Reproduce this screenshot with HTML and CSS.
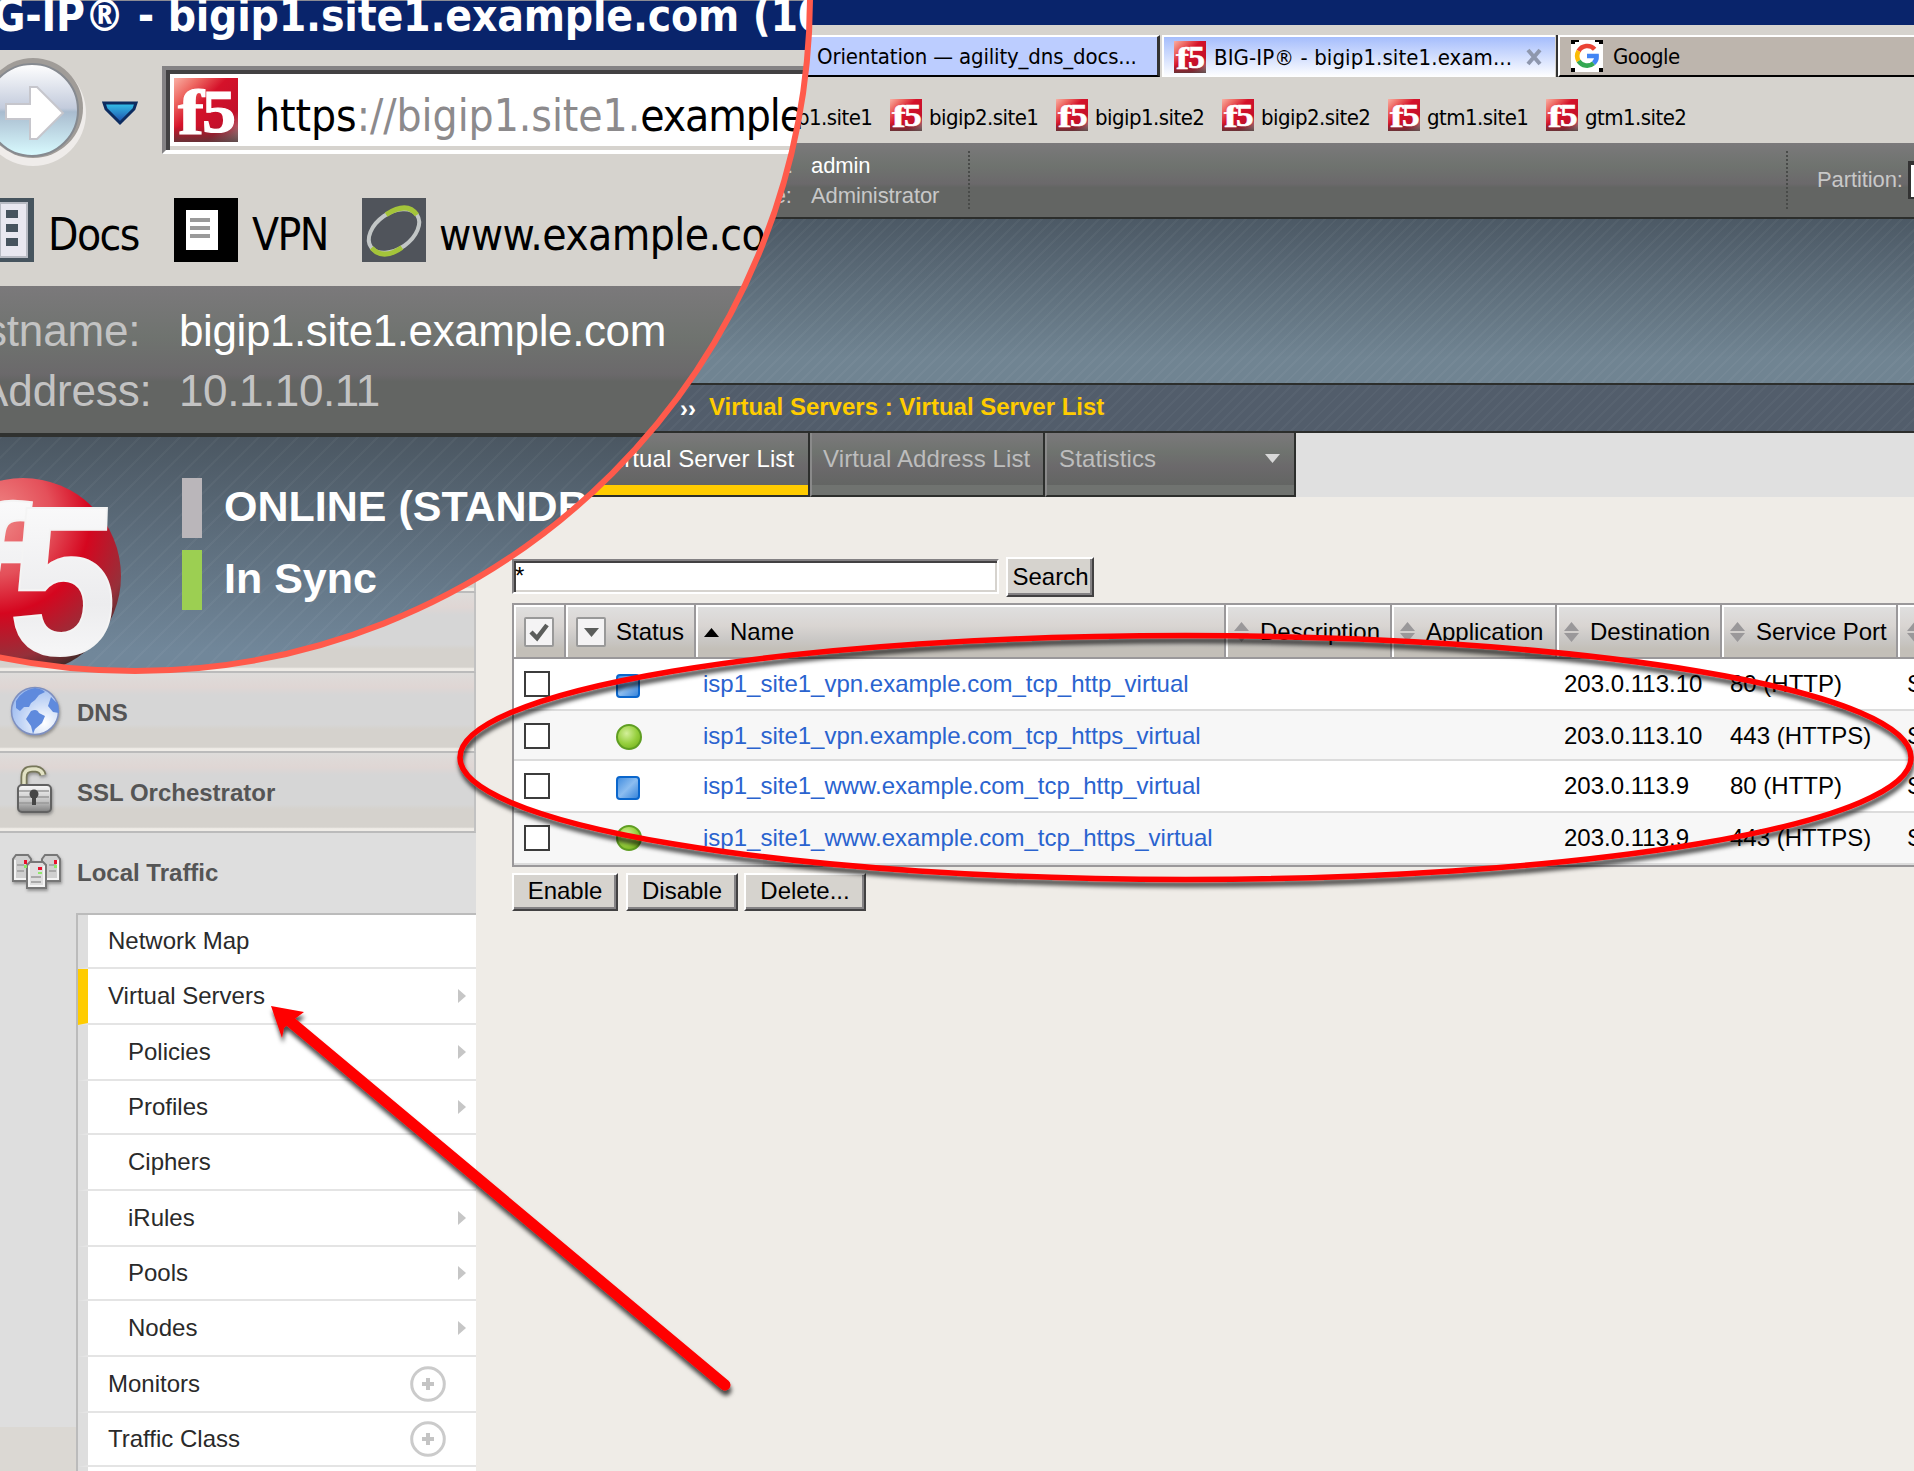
FILE: index.html
```html
<!DOCTYPE html>
<html lang="en">
<head>
<meta charset="utf-8">
<title>BIG-IP® - bigip1.site1.example.com</title>
<link rel="stylesheet" href="styles.css">
</head>
<body>
<svg class="defs" width="0" height="0">
  <defs>
    <linearGradient id="favbg" x1="0" y1="0" x2="1" y2="1">
      <stop offset="0" stop-color="#f9b0a4"/><stop offset=".2" stop-color="#ee6862"/><stop offset=".42" stop-color="#d5122a"/><stop offset=".75" stop-color="#c2102a"/><stop offset="1" stop-color="#a39b9b"/>
    </linearGradient>
    <linearGradient id="favshade" x1="0" y1="0" x2="0" y2="1">
      <stop offset=".75" stop-color="#503030" stop-opacity="0"/><stop offset="1" stop-color="#503a3a" stop-opacity=".8"/>
    </linearGradient>
    <radialGradient id="ball" cx=".35" cy=".2" r=".85">
      <stop offset="0" stop-color="#f08a88"/><stop offset=".35" stop-color="#e4505a"/><stop offset=".58" stop-color="#d5061f"/><stop offset=".85" stop-color="#96303a"/><stop offset="1" stop-color="#3c2826"/>
    </radialGradient>
    <linearGradient id="five" x1="0" y1="0" x2="0" y2="1">
      <stop offset="0" stop-color="#fff"/><stop offset=".6" stop-color="#ececee"/><stop offset="1" stop-color="#fff"/>
    </linearGradient>
    <linearGradient id="nav" x1="0" y1="0" x2="0" y2="1">
      <stop offset="0" stop-color="#fff"/><stop offset=".48" stop-color="#c3cbdc"/><stop offset=".52" stop-color="#a9bccf"/><stop offset="1" stop-color="#d9fbff"/>
    </linearGradient>
    <linearGradient id="drop" x1="0" y1="0" x2="0" y2="1">
      <stop offset="0" stop-color="#35c4ea"/><stop offset="1" stop-color="#1c48a8"/>
    </linearGradient>
    <linearGradient id="blue" x1="0" y1="0" x2="1" y2="1">
      <stop offset="0" stop-color="#3d8ade"/><stop offset=".5" stop-color="#8cbdf0"/><stop offset="1" stop-color="#2f7fd8"/>
    </linearGradient>
    <radialGradient id="green" cx=".4" cy=".35" r=".7">
      <stop offset="0" stop-color="#d3ef9a"/><stop offset=".6" stop-color="#97d03f"/><stop offset="1" stop-color="#79b51f"/>
    </radialGradient>
    <radialGradient id="globe" cx=".7" cy=".75" r=".9">
      <stop offset="0" stop-color="#fff"/><stop offset="1" stop-color="#8fb2ee"/>
    </radialGradient>
    <linearGradient id="metal" x1="0" y1="0" x2="0" y2="1">
      <stop offset="0" stop-color="#fafafa"/><stop offset=".6" stop-color="#c2c2c2"/><stop offset="1" stop-color="#7e7e7e"/>
    </linearGradient>
    <filter id="soft" x="-20%" y="-20%" width="140%" height="150%"><feDropShadow dx="1" dy="2" stdDeviation="1.6" flood-color="#555" flood-opacity=".55"/></filter>
    <filter id="mark" filterUnits="userSpaceOnUse" x="0" y="0" width="1914" height="1471"><feDropShadow dx="1" dy="5" stdDeviation="2" flood-color="#000" flood-opacity=".7"/></filter>
    <symbol id="f5" viewBox="0 0 32 32">
      <rect width="32" height="32" fill="url(#favbg)"/>
      <rect width="32" height="32" fill="url(#favshade)"/>
      <g fill="#fff" stroke="#fff" stroke-width=".6" font-family="Liberation Serif, serif" font-weight="bold">
        <text x="2" y="28" font-size="32" textLength="13" lengthAdjust="spacingAndGlyphs">f</text>
        <text x="14" y="27" font-size="31" textLength="17" lengthAdjust="spacingAndGlyphs">5</text>
      </g>
    </symbol>
    <symbol id="sq" viewBox="0 0 24 24"><rect x="1" y="1" width="22" height="22" rx="3" fill="url(#blue)" stroke="#0a66cc" stroke-width="2"/></symbol>
    <symbol id="dot" viewBox="0 0 26 26"><circle cx="13" cy="13" r="12" fill="url(#green)" stroke="#5f9e22" stroke-width="2"/></symbol>
    <symbol id="sort" viewBox="0 0 15 20"><path d="M7.5 0L15 9H0zM7.5 20L15 11H0z" fill="#9a989a"/></symbol>
    <symbol id="plus" viewBox="0 0 36 36"><circle cx="18" cy="18" r="16.3" fill="#fff" stroke="#cbcbcb" stroke-width="3"/><path d="M18 12v12M12 18h12" stroke="#c4c4c4" stroke-width="4"/></symbol>
  </defs>
</svg>

<div class="titlebar"></div>
<div class="tabstrip">
  <div class="tab tab-bg"><span class="t1">Orientation — agility_dns_docs...</span></div>
  <div class="tab tab-on"><svg class="i32"><use href="#f5"/></svg><span class="t2">BIG-IP® - bigip1.site1.exam...</span>
    <svg class="close" viewBox="0 0 16 16"><path d="M2 1l12 14M14 1L2 15" stroke="#8e97ad" stroke-width="4"/></svg></div>
  <div class="tab tab-off">
    <svg class="i32" viewBox="0 0 32 32"><rect width="32" height="32" fill="#000"/><path d="M8 0h16v2h4v2h4v24h-4v4H4v-4H0V4h4V2h4z" fill="#fff"/>
      <g fill="none" stroke-width="4.6"><path d="M23.6 9.2A10 10 0 0 0 7.6 11" stroke="#ea4335"/><path d="M7.6 11a10 10 0 0 0 0 10" stroke="#fbbc05"/><path d="M7.6 21a10 10 0 0 0 15 2.2" stroke="#34a853"/><path d="M22.6 23.2A9 9 0 0 0 25.6 16H16" stroke="#4285f4"/></g></svg>
    <span class="t3">Google</span></div>
</div>
<div class="bookmarks">
  <div class="bm first"><span>bigip1.site1</span></div>
  <div class="bm"><svg class="i32"><use href="#f5"/></svg><span>bigip2.site1</span></div>
  <div class="bm"><svg class="i32"><use href="#f5"/></svg><span>bigip1.site2</span></div>
  <div class="bm"><svg class="i32"><use href="#f5"/></svg><span>bigip2.site2</span></div>
  <div class="bm short"><svg class="i32"><use href="#f5"/></svg><span>gtm1.site1</span></div>
  <div class="bm short"><svg class="i32"><use href="#f5"/></svg><span>gtm1.site2</span></div>
</div>
<header class="info">
  <dl class="who">
    <dt>User:</dt><dd class="strong">admin</dd>
    <dt>Role:</dt><dd>Administrator</dd>
  </dl>
  <div class="dots"></div>
  <div class="grow"></div>
  <div class="dots"></div>
  <div class="partition">Partition:</div>
  <div class="select"></div>
</header>
<div class="banner"></div>

<div class="body">
  <nav class="side">
    <div class="gap"></div>
    <div class="sec"></div><div class="sec"></div><div class="sec"></div>
    <div class="sec">
      <svg class="sicon" viewBox="0 0 56 60"><g filter="url(#soft)"><circle cx="27" cy="29" r="23.5" fill="url(#globe)" stroke="#7d8fc0" stroke-width="1.5"/>
        <path transform="translate(-1 2)" d="M9 17Q15 6 28 4q8 1 10 4l-6 3-4 5-4 3-2 4-5 0-4 4-4-3zM24 27q6-3 8 2l6 3-3 7-7 6-2 5-2-8-5-7zM44 13l7 7 1 9-6-1-5-6z" fill="#5f8add"/></g></svg>
      <span>DNS</span></div>
    <div class="sec">
      <svg class="sicon" viewBox="0 0 56 60"><g filter="url(#soft)"><path d="M16 24V15q0-8 8-8h4q6 1 7 6" fill="none" stroke="#77775a" stroke-width="7"/><path d="M16 24V15q0-8 8-8h4q6 1 7 6" fill="none" stroke="#e2e2c4" stroke-width="3.5"/>
        <rect x="10" y="23" width="33" height="27" rx="4" fill="url(#metal)" stroke="#626262" stroke-width="2"/><path d="M11 29h30M11 35h30M11 41h30" stroke="#999" stroke-width="1.5"/><circle cx="26" cy="32" r="4.5" fill="#444"/><path d="M24 33h4v10h-4z" fill="#444"/></g></svg>
      <span>SSL Orchestrator</span></div>
    <div class="local">
      <svg class="sicon" viewBox="0 -3 56 60"><g filter="url(#soft)" stroke="#777" stroke-width="2">
        <path d="M5 13l3-4h12l3 4v22H5z" fill="#d0d0d0"/>
        <path d="M34 13l3-4h12l3 4v22H34z" fill="#d0d0d0"/>
        <path d="M19 19l3-3h13l3 3v23H19z" fill="#dedede"/></g>
        <g fill="none" stroke="#f4f4f4" stroke-width="2"><path d="M7 14v19h11M50 14v19H39M21 20v20h15V20"/></g>
        <g><path d="M9 19h7M9 25h7M41 19h7M41 25h7M23 31h10M23 36h10" stroke="#aaa" stroke-width="2"/><path d="M16 14h3v4h-3zM46 14h3v4h-3zM30 21h4v3h-4z" fill="#e8112d"/><path d="M16 19h3v3h-3zM46 19h3v3h-3zM30 26h4v2h-4z" fill="#8fe86a"/></g></svg>
      <span>Local Traffic</span></div>
    <ul class="menu">
      <li>Network Map</li>
      <li class="on h2">Virtual Servers<i class="arr"></i></li>
      <li class="sub h2">Policies<i class="arr"></i></li>
      <li class="sub">Profiles<i class="arr"></i></li>
      <li class="sub h2">Ciphers</li>
      <li class="sub h2">iRules<i class="arr"></i></li>
      <li class="sub">Pools<i class="arr"></i></li>
      <li class="sub h2">Nodes<i class="arr"></i></li>
      <li class="h2">Monitors<svg class="plus"><use href="#plus"/></svg></li>
      <li>Traffic Class<svg class="plus"><use href="#plus"/></svg></li>
      <li></li>
    </ul>
  </nav>
  <main class="main">
    <div class="crumb"><span class="raquo">››</span><span>Virtual Servers : Virtual Server List</span></div>
    <div class="mtabs">
      <div class="mtab active">Virtual Server List</div>
      <div class="mtab mid">Virtual Address List</div>
      <div class="mtab last">Statistics<svg width="15" height="9"><path d="M0 0h15L7.500 9z" fill="#d8d8d8"/></svg></div>
    </div>
    <div class="content">
      <div class="search"><div class="input">*</div><div class="btn b0">Search</div></div>
      <div class="table">
        <div class="tr th">
          <div class="c1"><svg width="30" height="30"><rect x="1" y="1" width="28" height="28" rx="1" fill="#f4f3f4" stroke="#999" stroke-width="2"/><path d="M7 15l6 6L23 8" fill="none" stroke="#5b5d5b" stroke-width="4.500"/></svg></div>
          <div class="c2"><svg width="30" height="30"><rect x="1" y="1" width="28" height="28" rx="1" fill="#f4f3f4" stroke="#999" stroke-width="2"/><path d="M8 11h15l-7.500 9z" fill="#5b5d5b"/></svg><span>Status</span></div>
          <div class="c3"><svg width="15" height="9"><path d="M7.500 0L15 9H0z" fill="#000"/></svg><span>Name</span></div>
          <div class="c4"><svg class="so"><use href="#sort"/></svg><span>Description</span></div>
          <div class="c5"><svg class="so"><use href="#sort"/></svg><span>Application</span></div>
          <div class="c6"><svg class="so"><use href="#sort"/></svg><span>Destination</span></div>
          <div class="c7"><svg class="so"><use href="#sort"/></svg><span>Service Port</span></div>
          <div class="c8"><svg class="so"><use href="#sort"/></svg></div>
        </div>
        <div class="tr td"><div class="c1"><b class="box"></b></div><div class="c2"><svg class="sq"><use href="#sq"/></svg></div><div class="c3">isp1_site1_vpn.example.com_tcp_http_virtual</div><div class="c4"></div><div class="c5"></div><div class="c6">203.0.113.10</div><div class="c7">80 (HTTP)</div><div class="c8">Standard</div></div>
        <div class="tr td even"><div class="c1"><b class="box"></b></div><div class="c2"><svg class="dot"><use href="#dot"/></svg></div><div class="c3">isp1_site1_vpn.example.com_tcp_https_virtual</div><div class="c4"></div><div class="c5"></div><div class="c6">203.0.113.10</div><div class="c7">443 (HTTPS)</div><div class="c8">Standard</div></div>
        <div class="tr td"><div class="c1"><b class="box"></b></div><div class="c2"><svg class="sq"><use href="#sq"/></svg></div><div class="c3">isp1_site1_www.example.com_tcp_http_virtual</div><div class="c4"></div><div class="c5"></div><div class="c6">203.0.113.9</div><div class="c7">80 (HTTP)</div><div class="c8">Standard</div></div>
        <div class="tr td even tall"><div class="c1"><b class="box"></b></div><div class="c2"><svg class="dot"><use href="#dot"/></svg></div><div class="c3">isp1_site1_www.example.com_tcp_https_virtual</div><div class="c4"></div><div class="c5"></div><div class="c6">203.0.113.9</div><div class="c7">443 (HTTPS)</div><div class="c8">Standard</div></div>
      </div>
      <div class="actions"><div class="btn b1">Enable</div><div class="btn b2">Disable</div><div class="btn b3">Delete...</div></div>
    </div>
  </main>
</div>

<svg class="marks" viewBox="0 0 1914 1471">
  <ellipse cx="1185.500" cy="757.5" rx="725.500" ry="122" fill="none" stroke="#f00" stroke-width="5.500" filter="url(#mark)"/>
  <g filter="url(#mark)"><path d="M286 1018L725 1385" stroke="#f00" stroke-width="11" stroke-linecap="round"/><path d="M271 1006l33 6-12 9-8 7-2 10z" fill="#f00"/></g>
</svg>

<div class="lens">
  <div class="ltitle">G-IP® - <span>bigip1.site1.example.com (10.1.10.11)</span></div>
  <div class="ltool">
    <svg class="lnav" width="150" height="124" viewBox="0 0 150 124">
      <circle cx="33" cy="63" r="53" fill="#efecea"/><circle cx="33" cy="58" r="50" fill="#a09c98"/><circle cx="32" cy="60" r="46" fill="url(#nav)" stroke="#868a90" stroke-width="2"/>
      <path d="M6 54h24V37h7l26 26-26 26h-7V69H6z" fill="#fff" stroke="#c6c6cc" stroke-width="2"/>
      <path d="M104 53h32l-2 6-14 14-14-14z" fill="url(#drop)" stroke="#0d2c60" stroke-width="3"/>
    </svg>
    <div class="lurl"><svg class="i64"><use href="#f5"/></svg><span class="u"><span>https</span><em>://bigip1.site1.</em><span class="dom">example.com</span></span></div>
  </div>
  <div class="lbm">
    <svg class="ldoc" width="34" height="64"><rect width="34" height="64" fill="#46545e"/><rect x="0" y="5" width="27" height="54" fill="#e8e8f0" stroke="#b8bcc4" stroke-width="2"/><path d="M6 12h12v8H6zM6 26h12v8H6zM6 40h12v8H6z" fill="#46545e"/></svg>
    <span class="docs">Docs</span>
    <svg class="i64" viewBox="0 0 64 64"><rect width="64" height="64" fill="#000"/><rect x="12" y="12" width="32" height="40" fill="#fff"/><path d="M16 22h20M16 30h20M16 38h20" stroke="#9a9a9a" stroke-width="4"/></svg>
    <span class="vpn">VPN</span>
    <svg class="i64" viewBox="0 0 64 64"><rect width="64" height="64" fill="#50545b"/><g fill="none" stroke-width="4" transform="rotate(-35 32 33)"><ellipse cx="32" cy="33" rx="28" ry="18" stroke="#c2c6c6"/><path d="M35 15q25 1 25 18M4 34q2 17 25 17" stroke="#a4c43a" stroke-width="5"/></g></svg>
    <span class="www">www.example.com</span>
  </div>
  <dl class="linfo"><dt>Hostname:</dt><dd class="strong">bigip1.site1.example.com</dd><dt>IP Address:</dt><dd>10.1.10.11</dd></dl>
  <div class="lstat stripes">
    <svg class="lball" width="182" height="240" viewBox="0 0 182 240">
      <circle cx="23" cy="139" r="98" fill="url(#ball)"/>
      <g fill="url(#five)" stroke="#f4f4f4" stroke-width="2" font-family="Liberation Sans, sans-serif" font-weight="bold">
        <text transform="translate(-64 218) skewX(-8)" font-size="213" textLength="74" lengthAdjust="spacingAndGlyphs">f</text>
        <text transform="translate(7 217) skewX(-2)" font-size="212" textLength="108" lengthAdjust="spacingAndGlyphs">5</text>
      </g>
    </svg>
    <div class="lrows"><div class="lrow"><i></i><span>ONLINE (STANDBY)</span></div><div class="lrow sync"><i></i><span>In Sync</span></div></div>
  </div>
</div>
<div class="lensring"></div>
</body>
</html>
```
FILE: styles.css
```css
* { box-sizing: border-box; }
body {
  margin: 0; width: 1914px; height: 1471px; overflow: hidden; position: relative;
  display: flex; flex-direction: column;
  background: #efece7; color: #1e1e1e;
  font: 24px "Liberation Sans", Arial, sans-serif; white-space: nowrap;
}
svg { display: block; flex: none; overflow: visible; }
.defs { position: absolute; }
.i32 { width: 32px; height: 32px; }
.i64 { width: 64px; height: 64px; }
.grow { flex: 1; }

/* browser chrome */
.titlebar { height: 25px; flex: none; background: #09246b; }
.tabstrip {
  height: 52px; flex: none; display: flex; padding: 10px 0 0 560px; background: #d6d3ce; color: #000;
  font-family: "DejaVu Sans Condensed", "DejaVu Sans", sans-serif; font-size: 22px; font-stretch: condensed;
}
.tab { height: 42px; display: flex; align-items: center; gap: 8px; border-top: 2px solid #fff; }
.tab span { padding-top: 1px; }
.tab-bg { width: 600px; padding-left: 257px; background: #bccdff; border-right: 3px solid #333; border-bottom: 2px solid #000; }
.tab-on { width: 393px; margin-left: 2px; padding-left: 10px; border-left: 2px solid #fff; background: linear-gradient(#a5bdfc, #fff); }
.tab-off { flex: 1; gap: 10px; padding-left: 11px; background: #bdb5ad; border-bottom: 2px solid #000; border-left: 2px solid #fff; margin-left: 3px; box-shadow: -2px 0 0 #333; }
.t1 { letter-spacing: -0.15px; }
.t2 { letter-spacing: 0.1px; flex: 1; }
.t3 { letter-spacing: -0.5px; }
.close { width: 16px; height: 16px; margin-right: 13px; }
.bookmarks {
  height: 66px; flex: none; display: flex; padding: 10px 0 0 763px; background: #d6d3ce; color: #000;
  font-family: "DejaVu Sans Condensed", "DejaVu Sans", sans-serif; font-size: 22px; font-stretch: condensed; letter-spacing: -0.55px;
}
.bm { display: flex; align-items: center; gap: 7px; width: 166px; }
.bm span { padding-top: 4px; }
.bm.first { width: 127px; }
.bm.short { width: 158px; }

/* product header */
.info {
  height: 76px; flex: none; display: flex; color: #c8c8c8; font-size: 22px;
  background: linear-gradient(#7b797b, #6f736f 30%, #6b696b 55%, #636563 60%, #636563); border-bottom: 2px solid #2c2e2c;
}
.who { margin: 0; padding: 8px 0 0 741px; width: 968px; display: grid; grid-template-columns: 70px 1fr; grid-auto-rows: 30px; line-height: 30px; letter-spacing: -.1px; }
.who dt, .who dd { margin: 0; }
.strong { color: #fff; }
.dots { width: 2px; height: 58px; margin-top: 8px; background: repeating-linear-gradient(#494b49 0 2px, transparent 2px 4px); }
.partition { width: 120px; padding-left: 29px; line-height: 73px; letter-spacing: -.1px; }
.select { width: 6px; height: 38px; margin-top: 18px; background: #fff; border: 2px solid #333; border-width: 4px 0 2px 3px; }
.stripes { background: repeating-linear-gradient(135deg, rgba(255,255,255,.035) 0 2px, transparent 2px 14px), linear-gradient(#4b5762, #71879a 90%); }
.banner { height: 166px; flex: none; background: repeating-linear-gradient(135deg, rgba(255,255,255,.035) 0 2px, transparent 2px 8px), linear-gradient(#4c5965, #708492 85%); border-bottom: 2px solid #2c2e2c; }

.body { flex: 1; display: flex; min-height: 0; }

/* navigation column */
.side { width: 476px; flex: none; overflow: hidden; color: #555; background: linear-gradient(#dedede 0 1042px, #dbd8d3 1042px); }
.gap { height: 48px; }
.sec {
  height: 80px; padding: 0 0 0 8px; display: flex; align-items: center; font-weight: bold;
  border-bottom: 2px solid #bbb; border-right: 2px solid #c2c2c2;
  background: linear-gradient(#dedcda, #dfd6d4 18%, #d6d6d6 28%, #d6d6d6 66%, #d5d2cd 72%, #d5d2cd 95%, #efece7 97%);
}
.sicon { width: 56px; height: 60px; }
.sec span, .local span { padding-left: 13px; }
.sec span { padding-top: 1px; }
.local { height: 80px; padding-left: 8px; display: flex; align-items: center; font-weight: bold; }
.menu { margin: 0 0 0 76px; padding: 0; list-style: none; border: solid #bbb; border-width: 2px 0 0 2px; color: #2a2a2a; }
.menu li { height: 54px; display: flex; align-items: center; border-left: 10px solid #dedede; border-bottom: 2px solid #e4e4e4; background: #fff; padding: 0 0 1px 20px; }
.menu li.h2 { height: 56px; }
.menu li.on { border-left-color: #fc0; padding-left: 20px; }
.menu li.sub { padding-left: 40px; }
.arr { margin-left: auto; margin-right: 10px; border: solid transparent; border-width: 7px 0 7px 8px; border-left-color: #c6c6c6; }
.plus { width: 36px; height: 36px; margin: 0 30px 0 auto; }

/* main column */
.main { flex: 1; min-width: 0; }
.crumb { height: 48px; padding-left: 204px; display: flex; align-items: center; gap: 12px; color: #fc0; font-weight: bold; border-bottom: 2px solid #2c2e2c; background: repeating-linear-gradient(135deg, rgba(255,255,255,.03) 0 2px, transparent 2px 8px), #525d6b; }
.crumb span { padding-bottom: 2px; }
.crumb .raquo { color: #fff; width: 17px; padding: 1px 0 0; }
.mtabs { height: 64px; display: flex; background: #e0e0e0; }
.mtab { height: 64px; line-height: 52px; letter-spacing: .12px; color: #bdbdbd; border-right: 2px solid #2c2e2c; border-bottom: 2px solid #2c2e2c; border-left: 2px solid #8a8a8a; background: linear-gradient(#7b797b, #6f736f 30%, #6b696b 55%, #636563 84%, #707370 84%); }
.mtab.active { width: 334px; padding-left: 125px; color: #fff; background: linear-gradient(#7b797b, #6f736f 30%, #6b696b 55%, #636563 84%, #fc0 84%); }
.mtab.mid { width: 235px; padding-left: 11px; }
.mtab.last { width: 251px; padding: 0 14px 0 12px; display: flex; justify-content: space-between; }
.mtab.last svg { margin-top: 21px; }
.content { padding: 60px 0 0 36px; color: #000; }
.search { display: flex; gap: 7px; height: 46px; }
.input { width: 487px; height: 35px; margin-top: 2px; padding-left: 1px; line-height: 30px; background: #fff; border: 2px solid; border-color: #848284 #fff #fff #848284; box-shadow: inset 2px 2px 0 #424142, inset -2px -2px 0 #d6d3ce; }
.btn { background: #d6d3ce; text-align: center; border: 2px solid; border-color: #fff #424142 #424142 #fff; box-shadow: inset -2px -2px 0 #848284; }
.b0 { width: 88px; height: 40px; line-height: 35px; padding-left: 1px; }
.table { border: 2px solid #9a989a; border-right: 0; }
.tr { display: flex; height: 52px; border-bottom: 2px solid #dcdcdc; background: #fff; }
.tr > div { display: flex; align-items: center; flex: none; }
.c1 { width: 52px; padding-left: 10px; }
.c2 { width: 130px; padding-left: 10px; }
.c3 { width: 530px; padding-left: 7px; }
.c4 { width: 166px; padding-left: 8px; }
.c5 { width: 165px; padding-left: 8px; }
.c6 { width: 165px; padding-left: 7px; }
.c7 { width: 176px; padding-left: 8px; }
.c8 { width: 30px; padding-left: 9px; overflow: hidden; }
.th { height: 54px; border-bottom-color: #9a989a; background: linear-gradient(#e0e0e0, #d9d5d2 40%, #cac8c6 65%, #c3bfb8 85%); }
.th > div { border-right: 2px solid #9a989a; box-shadow: inset 2px 2px 0 #fff; padding-top: 2px; }
.th .c3 { padding-left: 8px; }
.th .c2 span { padding-left: 10px; }
.th .c3 span { padding-left: 11px; }
.th .c4 span, .th .c5 span, .th .c6 span, .th .c7 span { padding-left: 11px; }
.so { width: 15px; height: 20px; }
.even { height: 50px; background: #f7f7f7; }
.even > div { padding-top: 2px; }
.even.tall { height: 52px; }
.even.tall > div { padding-top: 0; }
.td .c2 { padding: 4px 0 0 50px; }
.td .c3 { color: #2a63cf; }
.sq { width: 24px; height: 24px; }
.dot { width: 26px; height: 26px; }
.box { width: 26px; height: 26px; background: #fff; border: 2px solid #3c3c3c; }
.actions { display: flex; padding-top: 6px; }
.actions .btn { height: 38px; line-height: 31px; }
.b1 { width: 106px; margin-right: 8px; }
.b2 { width: 112px; margin-right: 6px; }
.b3 { width: 122px; }

/* annotations */
.marks { position: absolute; left: 0; top: 0; width: 1914px; height: 1471px; }

/* magnifier */
.lens {
  position: absolute; left: -540px; top: -679.5px; width: 1350px; height: 1350px; border-radius: 50%; overflow: hidden;
  padding: 679.5px 0 0 540px; background: #09246b; color: #000; display: flex; flex-direction: column;
  font-family: "DejaVu Sans Condensed", "DejaVu Sans", sans-serif; font-stretch: condensed; font-size: 44px; line-height: 1;
}
.lensring { position: absolute; left: -543px; top: -682.500px; width: 1356px; height: 1356px; border-radius: 50%; border: 6px solid #ff5a4b; }
.ltitle { height: 50px; flex: none; line-height: 30px; color: #fff; font-weight: bold; letter-spacing: -.2px; background: #09246b; border-top: 1px solid #8c8c94; margin-left: -10px; padding-left: 3px; white-space: pre; }
.ltool { height: 124px; flex: none; display: flex; background: #d6d3ce; }
.lnav { margin-right: 12px; }
.lurl { width: 800px; height: 88px; margin-top: 16px; padding: 4px 0 0 8px; display: flex; align-items: center; gap: 17px; background: #fff; border: 4px solid; border-color: #848284 #fff #fff #848284; box-shadow: inset 4px 4px 0 #424142, inset 0 -4px 0 #d6d3ce; }
.lurl .i64 { margin-top: -4px; }
.u { padding-top: 8px; letter-spacing: -.05px; }
.u em { font-style: normal; color: #8c8a8c; }
.u .dom { letter-spacing: -1.1px; }
.lbm { height: 112px; flex: none; display: flex; align-items: center; background: #d6d3ce; letter-spacing: -1.6px; }
.lbm span { padding-top: 9px; }
.docs { width: 140px; padding-left: 14px; }
.vpn { width: 124px; padding-left: 14px; }
.www { padding-left: 13px; letter-spacing: -.6px; }
.linfo { height: 151px; flex: none; margin: 0; padding: 15px 0 0; display: grid; grid-template-columns: 179px 1fr; grid-auto-rows: 60px; line-height: 60px; color: #c3c3c3; font-family: "Liberation Sans", Arial, sans-serif; letter-spacing: -.4px; background: linear-gradient(#7b797b, #6f736f 35%, #6b696b 60%, #636563 65%, #636563); border-bottom: 4px solid #2f312f; }
.linfo dt { margin-left: -71px; letter-spacing: -.15px; }
.linfo dd { margin: 0; }
.linfo .strong { color: #fff; }
.lstat { flex: 1; display: flex; font-family: "Liberation Sans", Arial, sans-serif; font-size: 43px; font-weight: bold; color: #fff; }
.lrows { padding-top: 41px; display: flex; flex-direction: column; gap: 12px; }
.lrow { display: flex; gap: 22px; height: 60px; line-height: 57px; }
.lrow i { width: 20px; background: #bab6ba; }
.lrow.sync i { background: #9ccf52; }
```
